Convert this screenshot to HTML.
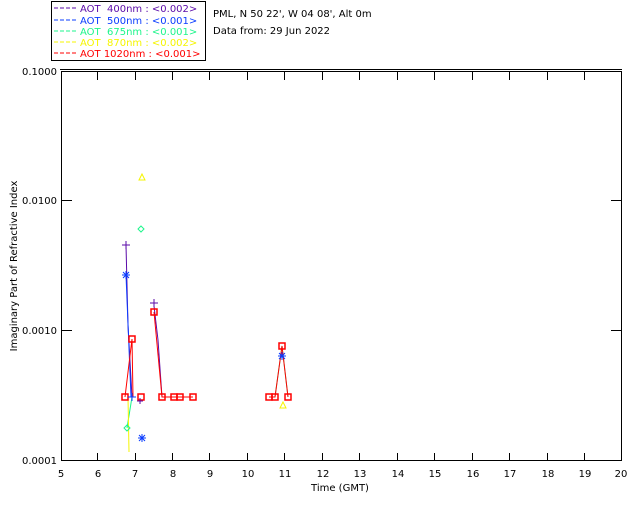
<!DOCTYPE html>
<html><head><style>
body{margin:0;background:#fff;width:640px;height:512px;overflow:hidden}
svg{display:block;font-family:"DejaVu Sans","Liberation Sans",sans-serif}
</style></head><body>
<svg width="640" height="512" viewBox="0 0 640 512" xmlns="http://www.w3.org/2000/svg">
<rect x="51.5" y="1.5" width="154" height="59" fill="none" stroke="#000" stroke-width="1"/>
<g font-size="10">
<line x1="54" y1="8" x2="76" y2="8" stroke="#5a0aa8" stroke-dasharray="4,2"/>
<text x="80" y="12" fill="#5a0aa8" xml:space="preserve">AOT  400nm : &lt;0.002&gt;</text>
<line x1="54" y1="20" x2="76" y2="20" stroke="#0a3cff" stroke-dasharray="4,2"/>
<text x="80" y="24" fill="#0a3cff" xml:space="preserve">AOT  500nm : &lt;0.001&gt;</text>
<line x1="54" y1="31" x2="76" y2="31" stroke="#1ef58c" stroke-dasharray="4,2"/>
<text x="80" y="35" fill="#1ef58c" xml:space="preserve">AOT  675nm : &lt;0.001&gt;</text>
<line x1="54" y1="42" x2="76" y2="42" stroke="#f5f500" stroke-dasharray="4,2"/>
<text x="80" y="46" fill="#f5f500" xml:space="preserve">AOT  870nm : &lt;0.002&gt;</text>
<line x1="54" y1="53" x2="76" y2="53" stroke="#f00" stroke-dasharray="4,2"/>
<text x="80" y="57" fill="#f00" xml:space="preserve">AOT 1020nm : &lt;0.001&gt;</text>
<text x="213" y="17" fill="#000">PML, N 50 22', W 04 08', Alt 0m</text>
<text x="213" y="34" fill="#000">Data from: 29 Jun 2022</text>
</g>
<g stroke="#000" fill="none" stroke-width="1">
<line x1="60" y1="69.5" x2="622" y2="69.5"/>
<rect x="61.5" y="71.5" width="560" height="389"/>
</g>
<g stroke="#000" stroke-width="1">
<line x1="97.5" y1="461" x2="97.5" y2="453"/><line x1="135.5" y1="461" x2="135.5" y2="453"/><line x1="172.5" y1="461" x2="172.5" y2="453"/><line x1="209.5" y1="461" x2="209.5" y2="453"/><line x1="247.5" y1="461" x2="247.5" y2="453"/><line x1="284.5" y1="461" x2="284.5" y2="453"/><line x1="322.5" y1="461" x2="322.5" y2="453"/><line x1="359.5" y1="461" x2="359.5" y2="453"/><line x1="397.5" y1="461" x2="397.5" y2="453"/><line x1="434.5" y1="461" x2="434.5" y2="453"/><line x1="472.5" y1="461" x2="472.5" y2="453"/><line x1="509.5" y1="461" x2="509.5" y2="453"/><line x1="547.5" y1="461" x2="547.5" y2="453"/><line x1="584.5" y1="461" x2="584.5" y2="453"/>
<line x1="97.5" y1="72" x2="97.5" y2="80"/><line x1="135.5" y1="72" x2="135.5" y2="80"/><line x1="172.5" y1="72" x2="172.5" y2="80"/><line x1="209.5" y1="72" x2="209.5" y2="80"/><line x1="247.5" y1="72" x2="247.5" y2="80"/><line x1="284.5" y1="72" x2="284.5" y2="80"/><line x1="322.5" y1="72" x2="322.5" y2="80"/><line x1="359.5" y1="72" x2="359.5" y2="80"/><line x1="397.5" y1="72" x2="397.5" y2="80"/><line x1="434.5" y1="72" x2="434.5" y2="80"/><line x1="472.5" y1="72" x2="472.5" y2="80"/><line x1="509.5" y1="72" x2="509.5" y2="80"/><line x1="547.5" y1="72" x2="547.5" y2="80"/><line x1="584.5" y1="72" x2="584.5" y2="80"/>
<line x1="62" y1="200.5" x2="72" y2="200.5"/><line x1="62" y1="330.5" x2="72" y2="330.5"/>
<line x1="611" y1="200.5" x2="621" y2="200.5"/><line x1="611" y1="330.5" x2="621" y2="330.5"/>
</g>
<g font-size="10" fill="#000">
<text x="57" y="75" text-anchor="end">0.1000</text>
<text x="57" y="204" text-anchor="end">0.0100</text>
<text x="57" y="334" text-anchor="end">0.0010</text>
<text x="57" y="464" text-anchor="end">0.0001</text>
<g text-anchor="middle">
<text x="61" y="477">5</text><text x="98" y="477">6</text><text x="135" y="477">7</text><text x="173" y="477">8</text><text x="210" y="477">9</text><text x="248" y="477">10</text><text x="285" y="477">11</text><text x="323" y="477">12</text><text x="360" y="477">13</text><text x="398" y="477">14</text><text x="435" y="477">15</text><text x="473" y="477">16</text><text x="510" y="477">17</text><text x="548" y="477">18</text><text x="585" y="477">19</text><text x="621" y="477">20</text>
<text x="340" y="491">Time (GMT)</text>
</g>
<text transform="translate(17,266) rotate(-90)" text-anchor="middle">Imaginary Part of Refractive Index</text>
</g>
<g fill="none" stroke-width="1">
<polyline points="126,245 128,325 132,397" stroke="#5a0aa8"/>
<polyline points="126,275 131,397" stroke="#0a3cff"/>
<polyline points="127,428 132,397" stroke="#1ef58c"/>
<polyline points="129,452 128,397" stroke="#f5f500"/>
<polyline points="125,397 132,339 133,397" stroke="#f00"/>
<polyline points="154,306 158,340 162,397" stroke="#5a0aa8"/>
<polyline points="154,312 162,397 174,397 180,397 193,397" stroke="#f00"/>
<polyline points="275,397 282,346 288,397" stroke="#1ef58c"/>
<polyline points="269,397 275,397 282,346 288,397" stroke="#f00"/>
</g>
<g fill="none" stroke="#f00" stroke-width="1.5">
<rect x="122" y="394" width="6" height="6"/><rect x="129" y="336" width="6" height="6"/><rect x="138" y="394" width="6" height="6"/><rect x="151" y="309" width="6" height="6"/><rect x="159" y="394" width="6" height="6"/><rect x="171" y="394" width="6" height="6"/><rect x="177" y="394" width="6" height="6"/><rect x="190" y="394" width="6" height="6"/><rect x="266" y="394" width="6" height="6"/><rect x="272" y="394" width="6" height="6"/><rect x="279" y="343" width="6" height="6"/><rect x="285" y="394" width="6" height="6"/>
</g>
<g stroke="#0a3cff" stroke-width="1">
<path d="M122,275h8M126,271v8M123,272l6,6M129,272l-6,6"/>
<path d="M138,438h8M142,434v8M139,435l6,6M145,435l-6,6"/>
<path d="M128,397h8M132,393v8"/>
<path d="M278,356h8M282,352v8M279,353l6,6M285,353l-6,6"/>
</g>
<g stroke="#5a0aa8" stroke-width="1"><path d="M122,245h8M126,241v8M150,303h8M154,299v8M137,401h6M140,398v6"/></g>
<path d="M142,174l-3,6h6z" fill="none" stroke="#f5f500"/>
<path d="M283,402l-3,6h6z" fill="none" stroke="#f5f500"/>
<path d="M141,226l3,3-3,3-3-3z" fill="none" stroke="#1ef58c"/>
<path d="M127,425l3,3-3,3-3-3z" fill="none" stroke="#1ef58c"/>
</svg>
</body></html>
